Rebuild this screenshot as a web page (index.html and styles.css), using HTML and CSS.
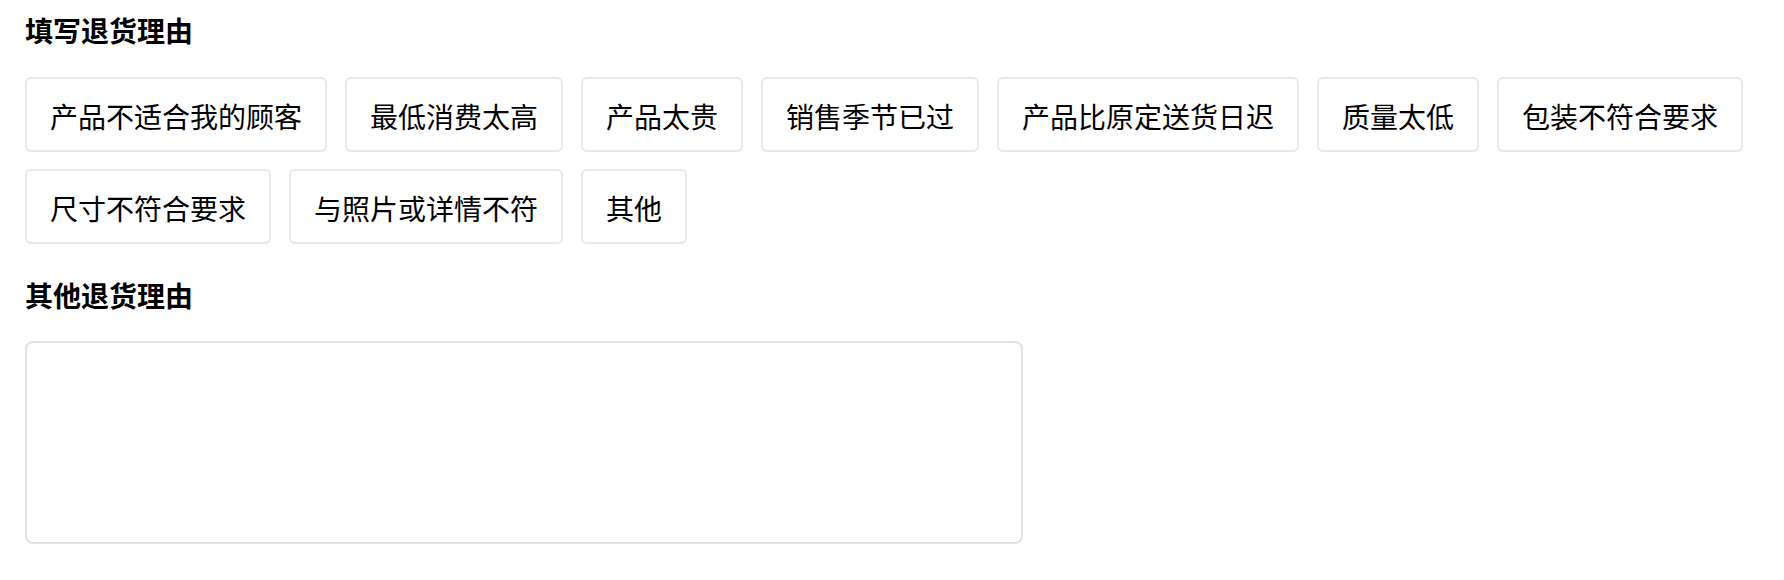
FILE: index.html
```html
<!DOCTYPE html>
<html>
<head>
    <meta charset="utf-8">
    <title>退货理由</title>
    <link rel="stylesheet" href="styles.css">
</head>
<body>
    <div class="return-form">
        <!-- Preset reasons -->
        <h2 class="section-title">填写退货理由</h2>
        <div class="reason-list">
            <button class="reason-tag">产品不适合我的顾客</button>
            <button class="reason-tag">最低消费太高</button>
            <button class="reason-tag">产品太贵</button>
            <button class="reason-tag">销售季节已过</button>
            <button class="reason-tag">产品比原定送货日迟</button>
            <button class="reason-tag">质量太低</button>
            <button class="reason-tag">包装不符合要求</button>
            <button class="reason-tag">尺寸不符合要求</button>
            <button class="reason-tag">与照片或详情不符</button>
            <button class="reason-tag">其他</button>
        </div>

        <!-- Free text reason -->
        <h2 class="section-title second">其他退货理由</h2>
        <textarea class="reason-input"></textarea>
    </div>
</body>
</html>
```

FILE: styles.css
```css
body {
    margin: 0;
    background-color: #fff;
    font-family: "Noto Sans CJK SC", "Noto Sans", sans-serif;
    color: #000;
}

.return-form {
    padding: 10px 25px;
}

.section-title {
    margin: 0 0 27px 0;
    font-size: 28px;
    font-weight: bold;
    line-height: 40px;
}

.section-title.second {
    margin-top: 31px;
    margin-bottom: 26px;
}

/* Tags wrap onto as many rows as they need */
.reason-list {
    display: flex;
    flex-wrap: wrap;
    gap: 17px 18px;
}

.reason-tag {
    display: flex;
    align-items: center;
    box-sizing: border-box;
    height: 75px;
    padding: 2px 23px 0;
    background-color: #fff;
    border: 2px solid #e8e8e8;
    border-radius: 6px;
    font-family: inherit;
    font-size: 28px;
    line-height: 40px;
    color: #000;
    cursor: pointer;
}

.reason-input {
    display: block;
    box-sizing: border-box;
    width: 998px;
    height: 203px;
    border: 2px solid #e3e3e3;
    border-radius: 8px;
    resize: none;
    outline: none;
}
```
